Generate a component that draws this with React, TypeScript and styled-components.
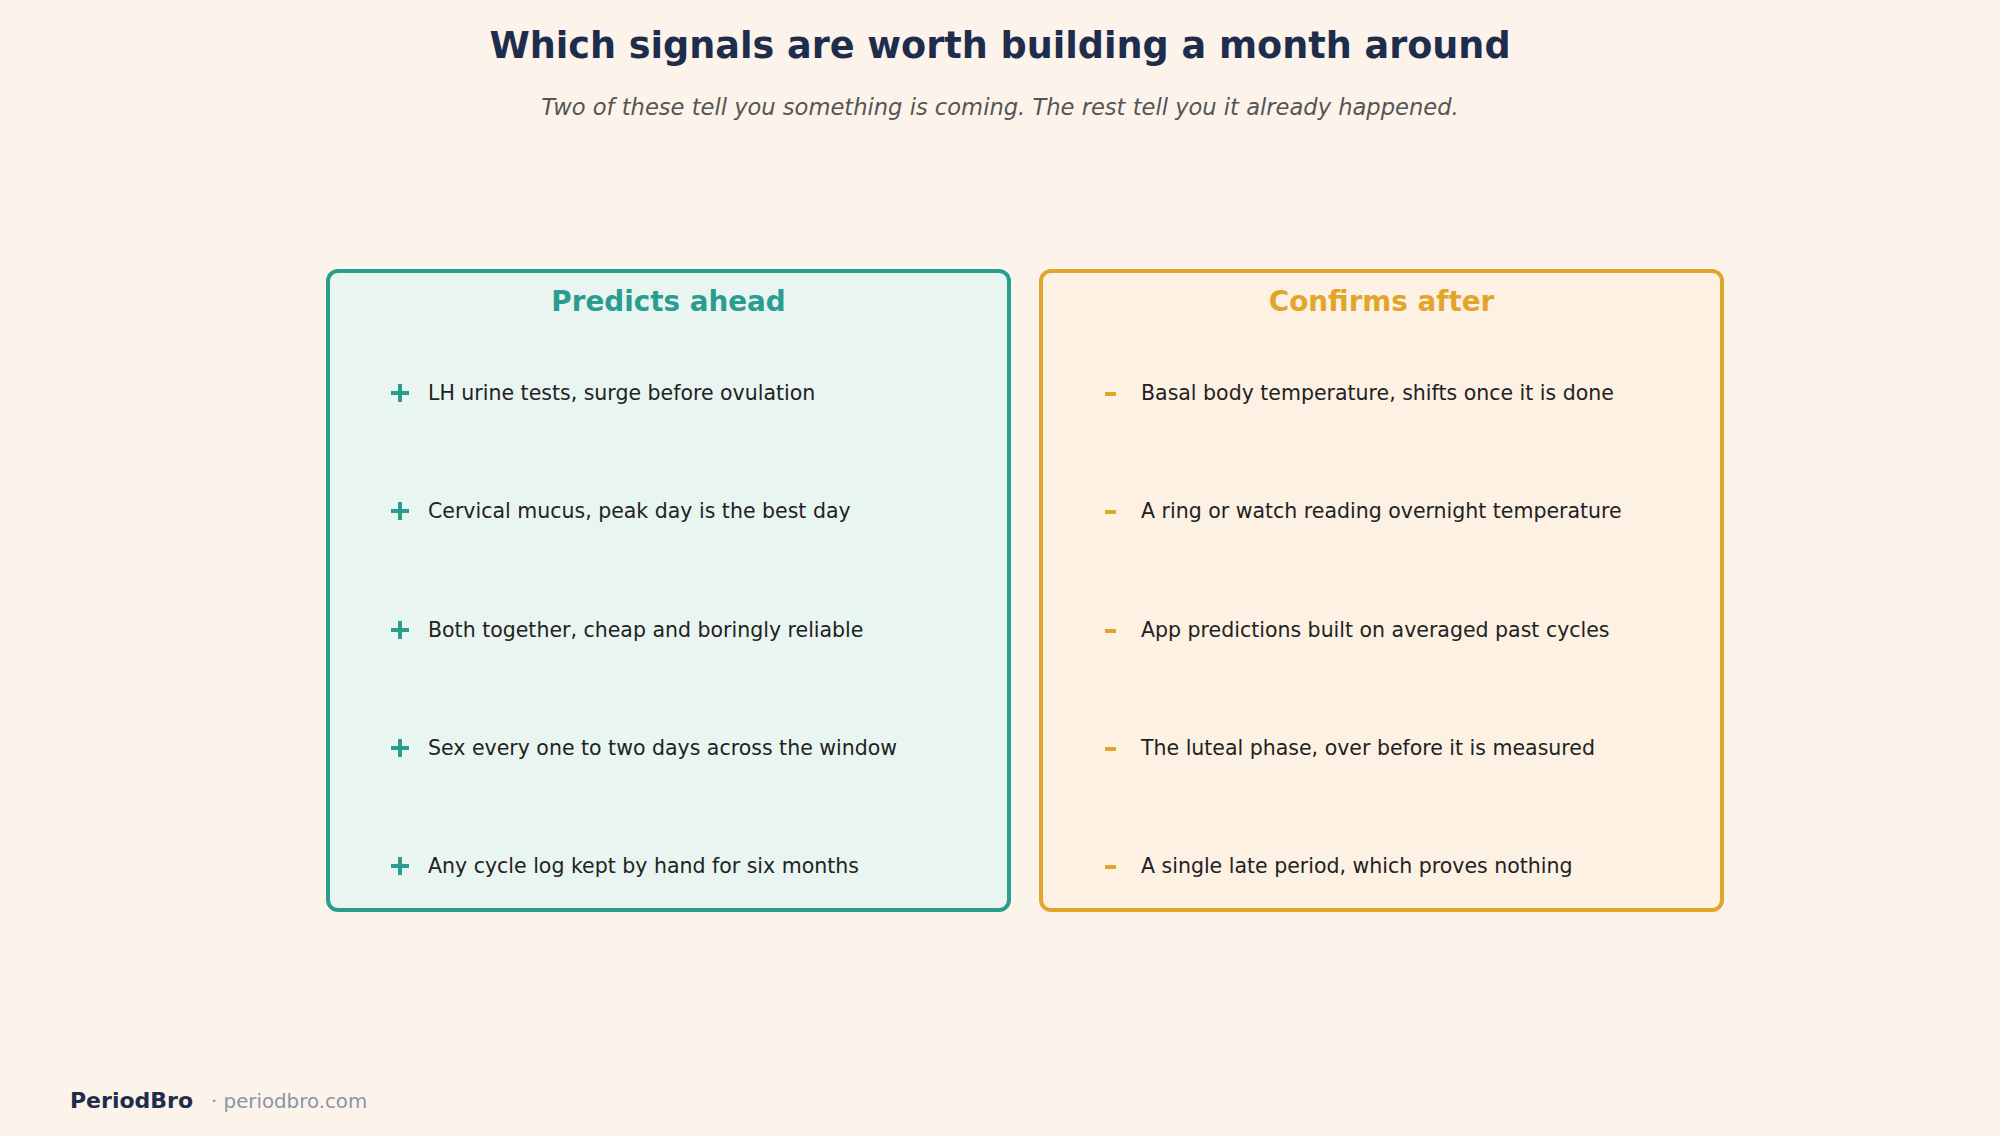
import React from "react";
import styled, { createGlobalStyle } from "styled-components";

const GlobalStyle = createGlobalStyle`
  html, body {
    margin: 0;
    padding: 0;
    background: #fcf3ea;
  }
  body {
    font-family: "DejaVu Sans", "Liberation Sans", sans-serif;
  }
`;

const Page = styled.div`
  width: 2000px;
  height: 1136px;
  display: flex;
  flex-direction: column;
  background: #fcf3ea;
  box-sizing: border-box;
  padding-top: 24px;
`;

const Title = styled.h1`
  margin: 0;
  text-align: center;
  font-size: 36.6px;
  line-height: 44px;
  font-weight: 700;
  color: #1f2d4d;
`;

const Subtitle = styled.p`
  margin: 25px 0 0;
  text-align: center;
  font-size: 22.6px;
  line-height: 28px;
  font-style: italic;
  color: #555555;
`;

const CardRow = styled.div`
  display: flex;
  justify-content: center;
  gap: 28px;
  margin-top: 148px;
  padding-left: 50px;
`;

type Tone = "teal" | "gold";

const toneColor: Record<Tone, string> = { teal: "#2a9d8f", gold: "#e2a52b" };
const toneFill: Record<Tone, string> = { teal: "#e8f5f0", gold: "#fcf1e3" };

const Card = styled.section<{ $tone: Tone }>`
  width: 685px;
  box-sizing: border-box;
  border: 4px solid ${(p) => toneColor[p.$tone]};
  border-radius: 12px;
  background: ${(p) => toneFill[p.$tone]};
  padding: 12px 0 27px 0;
  display: flex;
  flex-direction: column;
`;

const CardTitle = styled.h2<{ $tone: Tone }>`
  margin: 0;
  text-align: center;
  font-size: 27.8px;
  line-height: 34px;
  font-weight: 700;
  color: ${(p) => toneColor[p.$tone]};
`;

const List = styled.ul`
  list-style: none;
  margin: 59px 0 0;
  padding: 0 0 0 56px;
  display: flex;
  flex-direction: column;
  gap: 88.25px;
`;

const Item = styled.li`
  display: flex;
  align-items: center;
  height: 30px;
  gap: 14px;
`;

const Marker = styled.span`
  width: 28px;
  height: 30px;
  display: flex;
  align-items: center;
  justify-content: center;
  flex: none;
`;

const Plus = styled.span`
  position: relative;
  width: 18px;
  height: 18px;
  &::before,
  &::after {
    content: "";
    position: absolute;
    background: #2a9d8f;
  }
  &::before {
    left: 0;
    right: 0;
    top: 7px;
    height: 4px;
  }
  &::after {
    top: 0;
    bottom: 0;
    left: 7px;
    width: 4px;
  }
`;

const Dash = styled.span`
  width: 11px;
  height: 4px;
  margin-right: 6px;
  margin-top: 2px;
  background: #e2a52b;
`;

const ItemText = styled.span`
  font-size: 20.5px;
  line-height: 30px;
  color: #222222;
  white-space: nowrap;
`;

const Footer = styled.footer`
  margin-top: auto;
  padding: 0 0 20px 70px;
  display: flex;
  align-items: baseline;
  gap: 18px;
  line-height: 28px;
`;

const Brand = styled.span`
  font-size: 22px;
  font-weight: 700;
  color: #1f2d4d;
`;

const Site = styled.span`
  font-size: 19.8px;
  color: #8a95a8;
`;

const predicts = [
  "LH urine tests, surge before ovulation",
  "Cervical mucus, peak day is the best day",
  "Both together, cheap and boringly reliable",
  "Sex every one to two days across the window",
  "Any cycle log kept by hand for six months",
];

const confirms = [
  "Basal body temperature, shifts once it is done",
  "A ring or watch reading overnight temperature",
  "App predictions built on averaged past cycles",
  "The luteal phase, over before it is measured",
  "A single late period, which proves nothing",
];

export default function App() {
  return (
    <>
      <GlobalStyle />
      <Page>
        <Title>Which signals are worth building a month around</Title>
        <Subtitle>
          Two of these tell you something is coming. The rest tell you it already happened.
        </Subtitle>
        <CardRow>
          <Card $tone="teal">
            <CardTitle $tone="teal">Predicts ahead</CardTitle>
            <List>
              {predicts.map((t) => (
                <Item key={t}>
                  <Marker>
                    <Plus />
                  </Marker>
                  <ItemText>{t}</ItemText>
                </Item>
              ))}
            </List>
          </Card>
          <Card $tone="gold">
            <CardTitle $tone="gold">Confirms after</CardTitle>
            <List>
              {confirms.map((t) => (
                <Item key={t}>
                  <Marker>
                    <Dash />
                  </Marker>
                  <ItemText>{t}</ItemText>
                </Item>
              ))}
            </List>
          </Card>
        </CardRow>
        <Footer>
          <Brand>PeriodBro</Brand>
          <Site>· periodbro.com</Site>
        </Footer>
      </Page>
    </>
  );
}
